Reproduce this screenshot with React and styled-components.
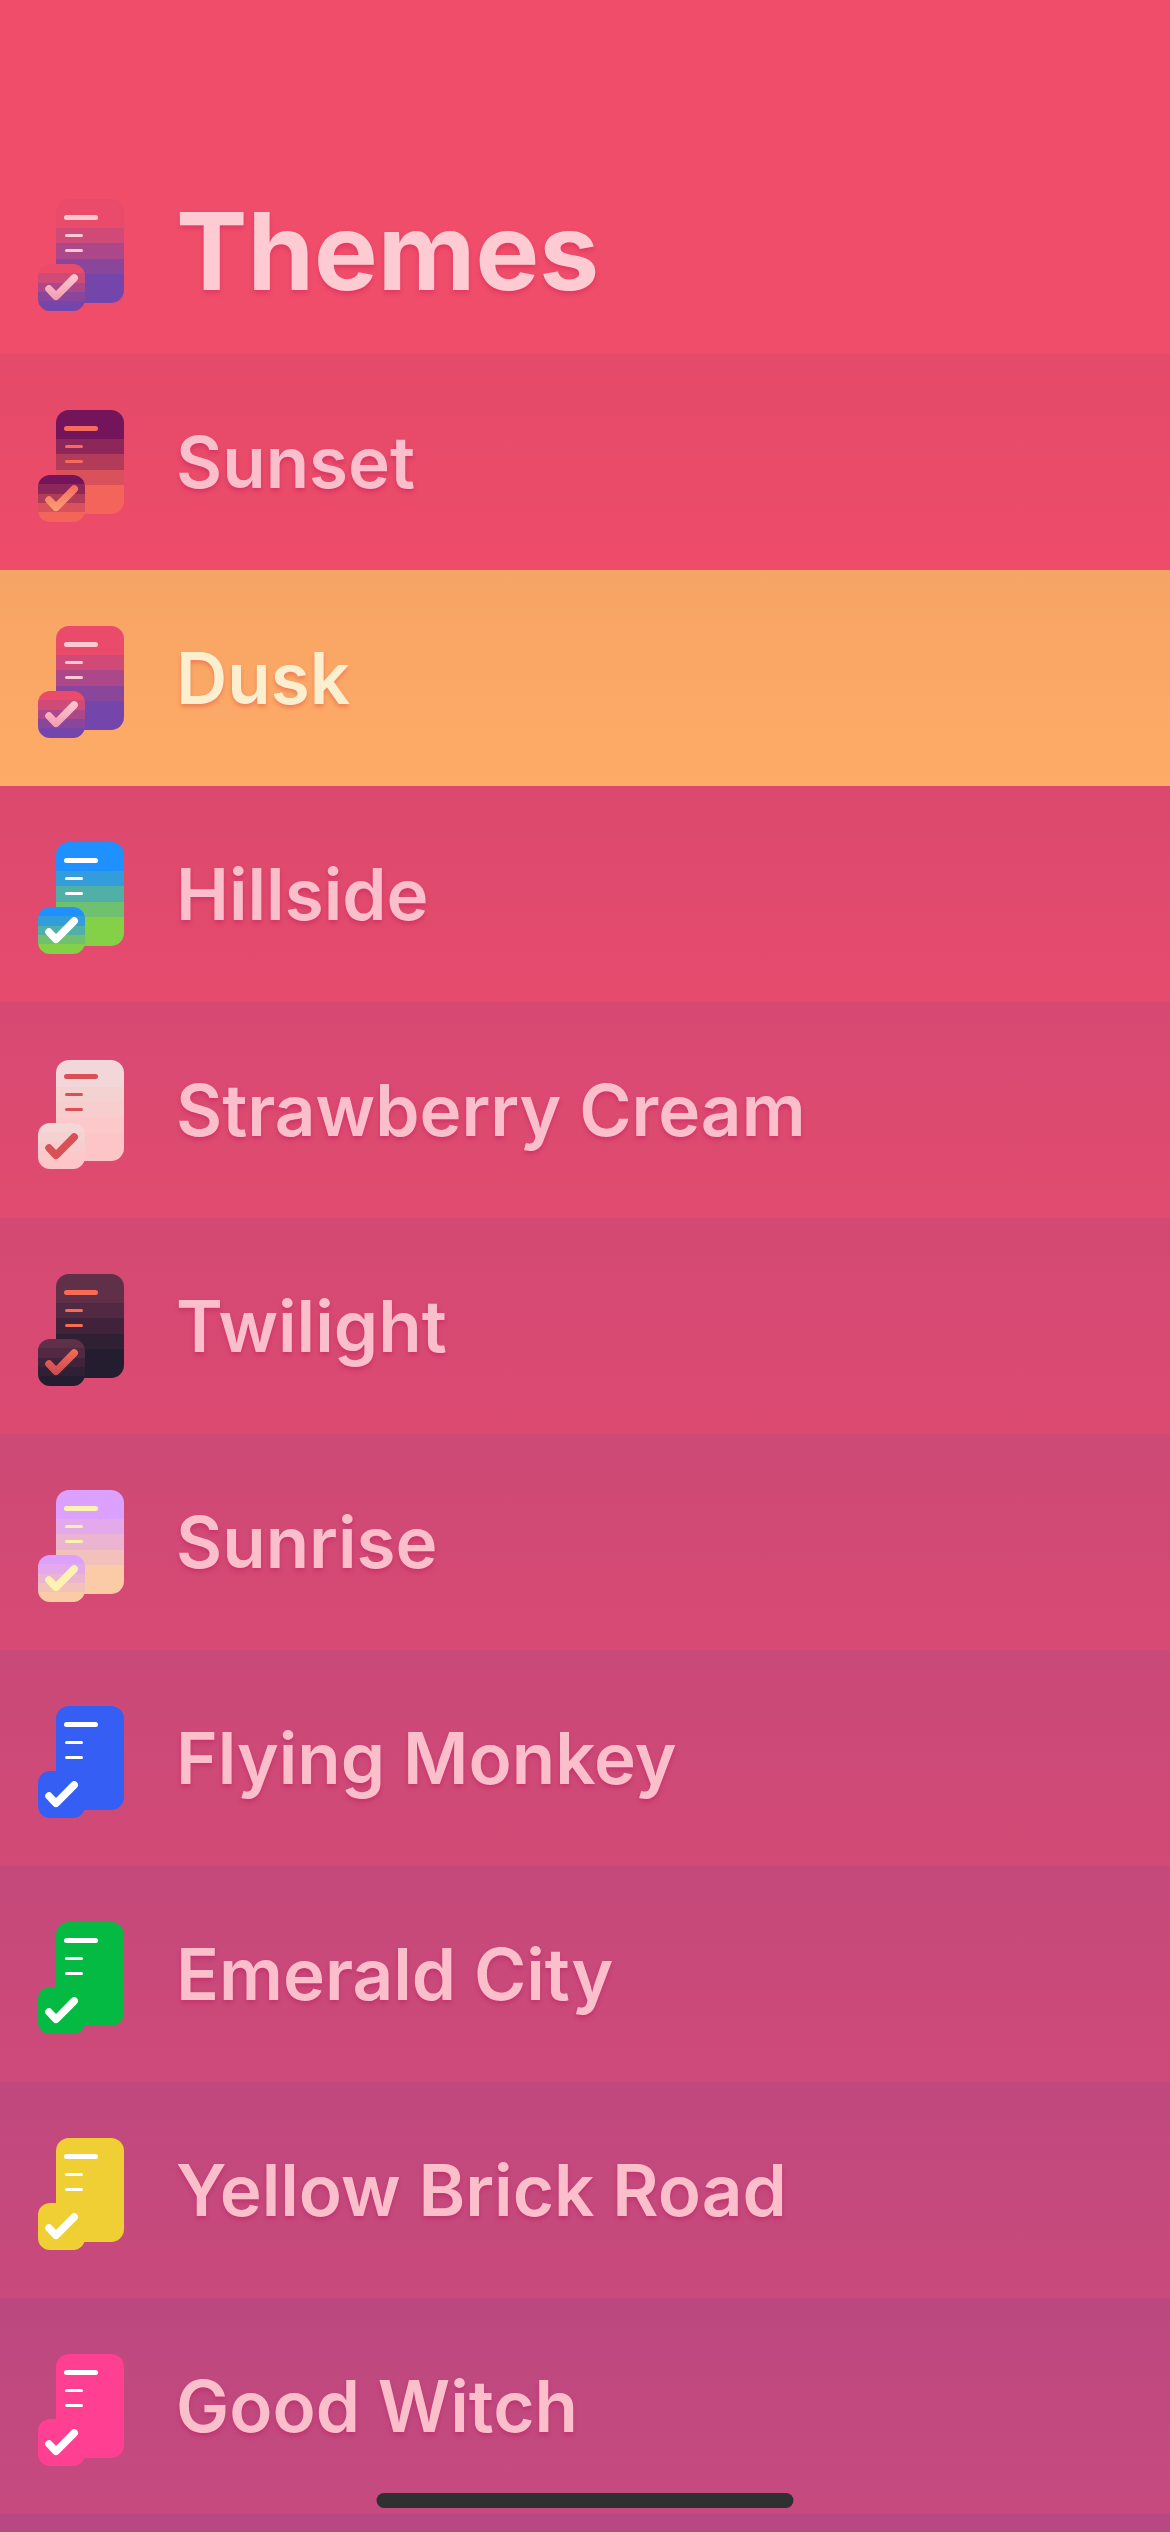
import React from "react";
import styled, { createGlobalStyle } from 'styled-components'


const dusk = {
    bands: ['#EB4B6A', '#D04A77', '#AC4889', '#8A469B', '#7445AB'],
    ink: ['#FFC9D2', '#F29BB0'],
}

const themes = [
    { name: 'Sunset', top: '#E44A69', bottom: '#EE4C69', icon: { bands: ['#74145A', '#8D275A', '#B23B5A', '#D9525B', '#F5645A'], ink: ['#F56C5E', '#F9A074'] } },
    { name: 'Dusk', top: '#F6A465', bottom: '#FFAB67', icon: dusk },
    { name: 'Hillside', top: '#DB496E', bottom: '#E64B6D', icon: { bands: ['#1E90FF', '#329DDA', '#50B0A8', '#6FC16F', '#84D147'], ink: ['#FFFFFF', '#FFFFFF'] } },
    { name: 'Strawberry Cream', top: '#D74972', bottom: '#E14B6F', icon: { bands: ['#F3D7D8', '#F5D2D2', '#F8CDCD', '#FCC8C9', '#FDC5C7'], ink: ['#D95055', '#D95055'], short: true } },
    { name: 'Twilight', top: '#D34973', bottom: '#DC4A71', icon: { bands: ['#602F48', '#512942', '#40233A', '#302034', '#241D30'], ink: ['#F76C52', '#C94A54'] } },
    { name: 'Sunrise', top: '#CD4976', bottom: '#D74A74', icon: { bands: ['#DCA0FF', '#E4A9EA', '#EBB5D2', '#F3C1BC', '#FBCBA7'], ink: ['#FDF2B0', '#FDF2B0'] } },
    { name: 'Flying Monkey', top: '#C94978', bottom: '#D24A76', icon: { bands: ['#355EF5'], ink: ['#FFFFFF', '#FFFFFF'] } },
    { name: 'Emerald City', top: '#C4497B', bottom: '#CE4A79', icon: { bands: ['#04BA43'], ink: ['#FFFFFF', '#FFFFFF'] } },
    { name: 'Yellow Brick Road', top: '#C0487E', bottom: '#C94A7B', icon: { bands: ['#F0CF35'], ink: ['#FFFFFF', '#FFFFFF'] } },
    { name: 'Good Witch', top: '#BC4880', bottom: '#C64A7E', icon: { bands: ['#FF3F92'], ink: ['#FFFFFF', '#FFFFFF'] } },
]

const Bands = ({ bands, stops, x, width }) => {
    if (bands.length === 1) {
        return <rect x={x} y={stops[0]} width={width} height={stops[5] - stops[0]} fill={bands[0]} />
    }
    return bands.map((color, i) => (
        <rect key={color} x={x} y={stops[i]} width={width} height={stops[i + 1] - stops[i]} fill={color} />
    ))
}

const ThemeIcon = ({ id, bands, ink, short }) => {
    const top = short ? 2 : 0
    const docHeight = short ? 101 : 104
    const badgeHeight = short ? 46 : 47
    return(
        <IconSvg viewBox="0 0 86 112" aria-hidden="true">
            <defs>
                <clipPath id={`doc-${id}`}><rect x="18" y={top} width="68" height={docHeight} rx="13" /></clipPath>
                <clipPath id={`badge-${id}`}><rect x="0" y="65" width="47" height={badgeHeight} rx="12" /></clipPath>
                <linearGradient id={`ink-${id}`} gradientUnits="userSpaceOnUse" x1="0" y1="75" x2="0" y2="101">
                    <stop offset="0" stopColor={ink[0]} />
                    <stop offset="1" stopColor={ink[1]} />
                </linearGradient>
            </defs>
            <g clipPath={`url(#doc-${id})`}>
                <Bands bands={bands} stops={[0, 29, 44, 60, 75, 104]} x="18" width="68" />
            </g>
            <rect x="26" y="16" width="34" height="5" rx="2.5" fill={ink[0]} />
            <rect x="27" y="35" width="18" height="3" rx="1.5" fill={ink[0]} />
            <rect x="27" y="50" width="18" height="3" rx="1.5" fill={ink[0]} />
            <g clipPath={`url(#badge-${id})`}>
                <Bands bands={bands} stops={[65, 74, 84, 93, 102, 112]} x="0" width="47" />
            </g>
            <path d="M11 90 L18 97.3 L36.2 79" fill="none" stroke={`url(#ink-${id})`} strokeWidth="7.5" strokeLinecap="round" strokeLinejoin="round" />
        </IconSvg>
    )
}

const App = () => {
    const [selected, setSelected] = React.useState('Dusk')
    const rows = themes.map((theme, i) => {
        return(
            <li key={theme.name}>
                <ThemeButton
                    type="button"
                    $top={theme.top}
                    $bottom={theme.bottom}
                    $selected={theme.name === selected}
                    aria-pressed={theme.name === selected}
                    onClick={() => setSelected(theme.name)}
                >
                    <ThemeIcon id={i} {...theme.icon} />
                    <ThemeName>{theme.name}</ThemeName>
                </ThemeButton>
            </li>
        )
    })

    return(
        <Screen>
            <GlobalStyle />
            <Header>
                <ThemeIcon id="header" {...dusk} />
                <Title>Themes</Title>
            </Header>
            <ThemeList>{rows}</ThemeList>
            <HomeIndicator />
        </Screen>
    )
}


export default App

// Styling
const GlobalStyle = createGlobalStyle`
    body {
        margin: 0;
        background-color: #B84883;
        font-family: Inter, "Liberation Sans", sans-serif;
    }
`
const Screen = styled.main`
    min-height: 100vh;
`
const Header = styled.header`
    display: flex;
    align-items: center;
    gap: 52px;
    padding: 184px 38px 36px;
    background-color: #EF4D6A;
    color: #FFCBD2;
`
const Title = styled.h1`
    margin: 0;
    font-size: 107px;
    line-height: 134px;
    font-weight: 700;
    text-shadow: 0 3px 4px rgba(200, 20, 80, 0.35);
`
const ThemeList = styled.ul`
    margin: 0;
    padding: 0;
    list-style: none;
`
const ThemeButton = styled.button`
    display: flex;
    align-items: center;
    gap: 52px;
    width: 100%;
    padding: 48px 38px;
    border: 0;
    font: inherit;
    text-align: left;
    cursor: pointer;
    color: ${(props) => props.$selected ? '#FBEFCF' : '#FBBECB'};
    background: linear-gradient(${(props) => props.$selected ? '#F6A465, #FFAB67' : `${props.$top}, ${props.$bottom}`});
    text-shadow: 0 3px 4px ${(props) => props.$selected ? 'rgba(225, 70, 60, 0.4)' : 'rgba(190, 20, 90, 0.4)'};
`
const ThemeName = styled.span`
    font-size: 71px;
    line-height: 120px;
    font-weight: 600;
`
const IconSvg = styled.svg`
    display: block;
    flex: none;
    width: 86px;
    height: 112px;
    margin-top: 8px;
`
const HomeIndicator = styled.div`
    position: fixed;
    bottom: 24px;
    left: 50%;
    width: 417px;
    height: 15px;
    border-radius: 8px;
    background-color: #303030;
    transform: translateX(-50%);
`
